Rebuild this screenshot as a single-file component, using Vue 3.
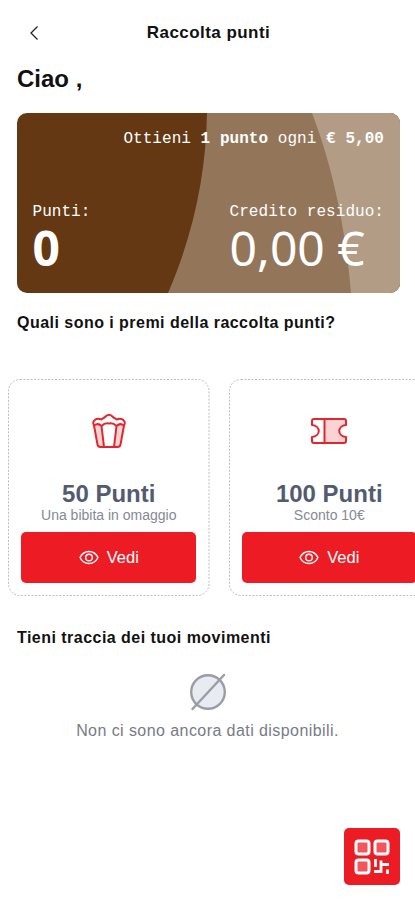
<script setup>
const rewards = [
  { points: '50 Punti', label: 'Una bibita in omaggio', icon: 'popcorn' },
  { points: '100 Punti', label: 'Sconto 10€', icon: 'ticket' },
]
</script>

<template>
  <div class="screen">
    <header class="topbar">
      <button class="back" aria-label="Indietro">
        <svg width="10" height="16" viewBox="0 0 10 16"><path d="M8.5 1.5 2 8l6.5 6.5" fill="none" stroke="#222" stroke-width="1.3" /></svg>
      </button>
      <h1>Raccolta punti</h1>
    </header>

    <h2 class="hello">Ciao ,</h2>

    <section class="balance">
      <svg class="waves" viewBox="0 0 383 180" preserveAspectRatio="none">
        <path d="M190 0C189 60 177 120 151 180H383V0Z" fill="#93765a" />
        <path d="M295 0C317 57 329 120 334 180H383V0Z" fill="#b29c86" />
      </svg>
      <p class="rule">Ottieni <b>1 punto</b> ogni <b>€ 5,00</b></p>
      <div class="amounts">
        <div>
          <p class="caption">Punti:</p>
          <p class="value strong">0</p>
        </div>
        <div>
          <p class="caption">Credito residuo:</p>
          <p class="value">0,00 €</p>
        </div>
      </div>
    </section>

    <h3 class="prizes-title">Quali sono i premi della raccolta punti?</h3>

    <div class="rewards">
      <article v-for="r in rewards" :key="r.points" class="reward">
        <svg class="border" width="202" height="217"><rect x=".5" y=".5" width="200.5" height="216" rx="11.5" fill="none" stroke="#bdbdbd" stroke-dasharray="2 1.5" /></svg>
        <div class="icon">
          <svg v-if="r.icon === 'popcorn'" width="34" height="36" viewBox="0 0 34 36" fill="none" stroke="#e3262d" stroke-width="2" stroke-linejoin="round" stroke-linecap="round">
            <path d="M2 12.5 7 34h5L9.500 13C7 11 5 11 2 12.5ZM32 12.5 27 34h-5l2.500-21c3-2 5-2 7.500-.5Z" fill="#fbd3d5" stroke="none" />
            <path d="M2 12.500C-.5 8 4 4.500 9.500 6.500C10.500 5 12.500 5 13 4Q17-.5 21 4C21.500 5 23.500 5 24.500 6.500C30 4.500 34.500 8 32 12.500L28.500 31.500Q28 34 25.500 34H8.500Q6 34 5.500 31.500Z" />
            <path d="M2 12.500Q6 9.500 9.500 13Q13 9.500 17 10.500Q21 9.500 24.500 13Q28 9.500 32 12.500M9.500 13l2.500 21M24.500 13l-2.500 21" />
          </svg>
          <svg v-else width="36" height="26" viewBox="0 0 36 26" fill="none" stroke="#e3262d" stroke-width="2" stroke-linejoin="round">
            <path d="M14 1H33Q35 1 35 3V7C26 8 26 18 35 19V23Q35 25 33 25H14Z" fill="#fbd3d5" stroke="none" />
            <path d="M3 1H33Q35 1 35 3V7C26 8 26 18 35 19V23Q35 25 33 25H3Q1 25 1 23V19C10 18 10 8 1 7V3Q1 1 3 1ZM13.500 1V25" />
          </svg>
        </div>
        <p class="points">{{ r.points }}</p>
        <p class="label">{{ r.label }}</p>
        <button class="view">
          <svg width="20" height="15" viewBox="0 0 20 15" fill="none" stroke="#fff" stroke-width="1.400">
            <path d="M1 7.500C5-.5 15-.5 19 7.500C15 15.500 5 15.500 1 7.500Z" /><circle cx="10" cy="7.500" r="3.300" />
          </svg>
          <span>Vedi</span>
        </button>
      </article>
    </div>

    <h3 class="moves-title">Tieni traccia dei tuoi movimenti</h3>

    <div class="empty">
      <svg width="38" height="38" viewBox="0 0 38 38" stroke="#9a9ca9" stroke-width="2.400">
        <circle cx="19" cy="19" r="16.800" fill="#e8ebef" /><path d="M3.500 36 35 2" stroke-linecap="round" />
      </svg>
      <p>Non ci sono ancora dati disponibili.</p>
    </div>

    <button class="fab" aria-label="Codice QR">
      <svg width="36" height="36" viewBox="0 0 36 36" fill="#f2555b" stroke="#fff" stroke-width="3">
        <rect x="2" y="2" width="13" height="13" rx="2.500" />
        <rect x="21" y="2" width="13" height="13" rx="2.500" />
        <rect x="2" y="21" width="13" height="13" rx="2.500" />
        <path d="M21.500 20v8M20 32.500h7V21.500M27 25.500h8M33.500 30.500v4.500" fill="none" stroke-width="2.800" />
      </svg>
    </button>
  </div>
</template>

<style>
body { margin: 0; background: #fff; overflow: hidden; }
</style>

<style scoped>
.screen { position: relative; width: 415px; height: 900px; overflow: hidden; background: #fff; color: #111; font-family: "Liberation Sans", Arial, sans-serif; }
h1, h2, h3, p { margin: 0; }
button { border: 0; padding: 0; font-family: inherit; }
.topbar { height: 65px; display: grid; grid-template-columns: 60px 1fr 58px; align-items: center; }
.back { display: flex; padding: 1px 0 0 29px; background: none; }
h1 { text-align: center; font-size: 17px; line-height: 24px; letter-spacing: .45px; }
.hello { padding-left: 17px; font-size: 24px; line-height: 28px; height: 48px; }
.balance { position: relative; box-sizing: border-box; width: 383px; height: 180px; margin-left: 16.500px; border-radius: 10px; overflow: hidden; background: #633813; color: #fff; padding: 16px 15.500px 0 16px; }
.waves { position: absolute; inset: 0; width: 100%; height: 100%; }
.rule, .amounts { position: relative; }
.rule, .caption { font-family: "Liberation Mono", monospace; font-size: 16px; line-height: 20px; letter-spacing: .05px; }
.rule { text-align: right; }
.amounts { display: flex; justify-content: space-between; padding-top: 53px; }
.value { font-family: "Noto Sans", sans-serif; font-size: 48px; line-height: 52px; white-space: nowrap; }
.strong { font-weight: 700; }
h3 { padding-left: 17px; font-size: 16px; line-height: 20px; letter-spacing: .47px; }
.prizes-title { padding-top: 20px; }
.rewards { display: flex; gap: 19px; padding: 46px 0 0 8px; }
.reward { position: relative; flex: none; width: 201.500px; height: 217px; display: flex; flex-direction: column; align-items: center; }
.border { position: absolute; inset: 0; }
.icon { height: 100px; padding-top: 2px; display: flex; align-items: center; }
.points { font-size: 24px; line-height: 26px; font-weight: 700; color: #535b70; }
.label { font-size: 14px; line-height: 16px; color: #858995; }
.view { display: flex; align-items: center; justify-content: center; gap: 8px; width: 175px; height: 51px; margin-top: 9px; border-radius: 5px; background: #ed1c24; color: #fff; font-size: 16.500px; }
.moves-title { padding-top: 32px; }
.empty { display: flex; flex-direction: column; align-items: center; padding-top: 25px; }
.empty p { margin-top: 10px; font-size: 16px; line-height: 20px; letter-spacing: .43px; color: #777b86; }
.fab { position: absolute; left: 343.500px; top: 828px; width: 56px; height: 57px; border-radius: 5px; background: #ed1c24; display: flex; align-items: center; justify-content: center; }
</style>
